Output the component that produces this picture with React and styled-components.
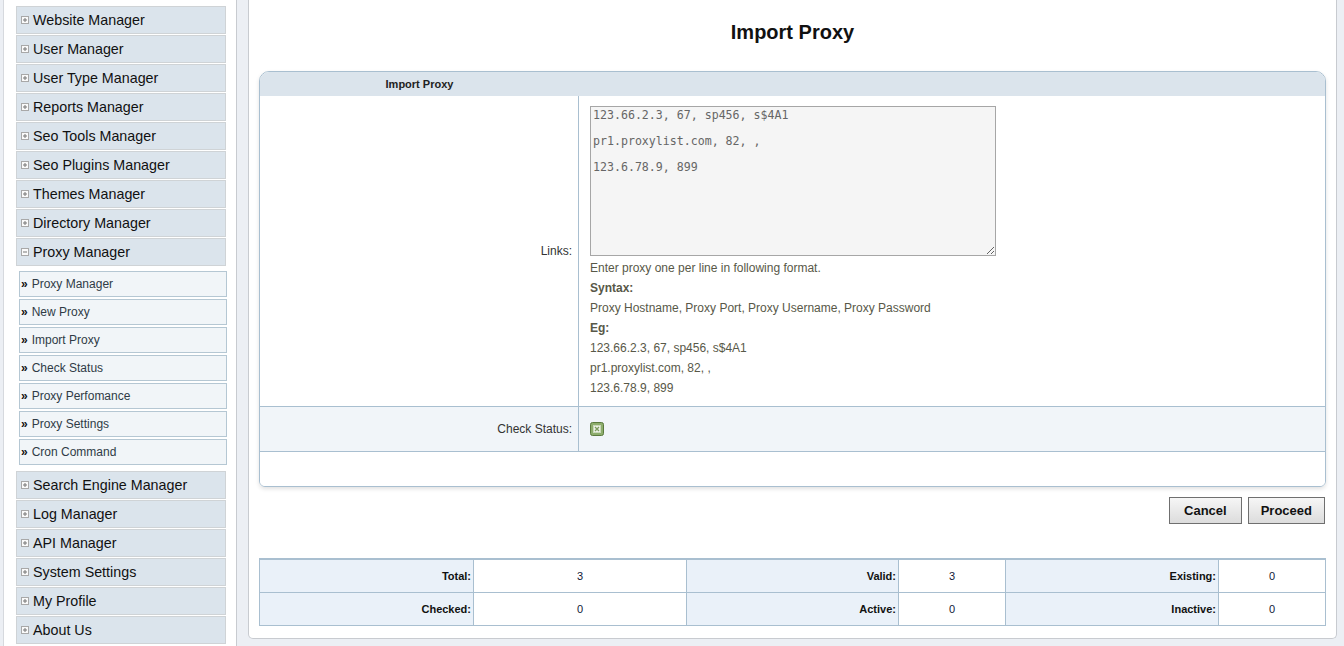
import React from 'react';
import styled, { createGlobalStyle } from 'styled-components';

const GlobalStyle = createGlobalStyle`
  html, body {
    margin: 0;
    padding: 0;
    background: #eceff4;
    font-family: "Liberation Sans", Arial, sans-serif;
    color: #333;
  }
`;

const Page = styled.div`
  display: flex;
  align-items: flex-start;
  height: 646px;
  overflow: hidden;
`;

const Sidebar = styled.div`
  box-sizing: border-box;
  display: flex;
  flex-direction: column;
  width: 234px;
  height: 660px;
  margin-left: 3px;
  padding: 6px 0 0 12px;
  background: #fff;
  border-left: 1px solid #d6d9de;
  border-right: 1px solid #c8cbd0;
`;

const MenuItem = styled.div`
  box-sizing: border-box;
  display: flex;
  align-items: center;
  flex-shrink: 0;
  gap: 4px;
  width: 210px;
  height: 28px;
  margin-bottom: 1px;
  padding-left: 4px;
  background: #dbe4ec;
  border: 1px solid #cfd3d6;
  font-size: 14.3px;
  color: #111;
`;

const SubList = styled.div`
  margin: 4px 0 4px 3px;
`;

const SubItem = styled.div`
  box-sizing: border-box;
  display: flex;
  align-items: center;
  width: 208px;
  height: 26px;
  margin-bottom: 2px;
  padding-left: 1px;
  background: #f1f5f8;
  border: 1px solid #b5c7d3;
  font-size: 12px;
  color: #2f3b46;
`;

const Arrows = styled.span`
  font-size: 12px;
  font-weight: bold;
  color: #111;
  margin-right: 4px;
`;

const Main = styled.div`
  box-sizing: border-box;
  width: 1089px;
  height: 639px;
  margin-left: 11px;
  padding: 20px 10px 0;
  background: #fff;
  border: 1px solid #c8cbd0;
  border-top: none;
  border-radius: 0 0 5px 5px;
`;

const Title = styled.h1`
  margin: 0 0 27px;
  font-size: 20px;
  line-height: 24px;
  font-weight: bold;
  text-align: center;
  color: #111;
`;

const Card = styled.div`
  border: 1px solid #a9bfd0;
  border-radius: 10px 10px 6px 6px;
  box-shadow: 0 2px 4px rgba(0, 0, 0, 0.12);
  overflow: hidden;
`;

const Row = styled.div`
  display: grid;
  grid-template-columns: 319px 1fr;
  background: ${p => p.$bg || '#fff'};
  border-bottom: ${p => (p.$last ? 'none' : '1px solid #a9bfd0')};
  min-height: ${p => p.$h || 0}px;
`;

const HeadRow = styled.div`
  display: grid;
  grid-template-columns: 319px 1fr;
  height: 24px;
  background: #dbe4ec;
`;

const HeadCell = styled.div`
  display: flex;
  align-items: center;
  justify-content: center;
  font-size: 11px;
  font-weight: bold;
  color: #222;
`;

const Label = styled.div`
  display: flex;
  align-items: center;
  justify-content: flex-end;
  padding-right: 6px;
  border-right: 1px solid #a9bfd0;
  font-size: 12px;
  color: #333;
`;

const Field = styled.div`
  display: flex;
  flex-direction: column;
  align-items: flex-start;
  justify-content: ${p => (p.$center ? 'center' : 'flex-start')};
  padding: ${p => (p.$center ? '0 11px' : '10px 11px 8px')};
`;

const Textarea = styled.textarea`
  box-sizing: border-box;
  width: 406px;
  height: 150px;
  margin: 0;
  padding: 2px 2px 1px;
  background: #f5f5f5;
  border: 1px solid #a6a6a6;
  font-family: "DejaVu Sans Mono", monospace;
  font-size: 11.6px;
  line-height: 13px;
  color: #666;
  outline: none;
`;

const Hint = styled.div`
  margin-top: 2px;
  font-size: 12px;
  line-height: 20px;
  color: #585848;
`;

const HintLine = styled.div`
  font-weight: ${p => (p.$bold ? 'bold' : 'normal')};
`;

const Buttons = styled.div`
  display: flex;
  justify-content: flex-end;
  gap: 6px;
  margin-top: 10px;
  padding-right: 1px;
`;

const Button = styled.button`
  box-sizing: border-box;
  height: 27px;
  padding: 0 ${p => p.$pad}px;
  background: linear-gradient(#f6f6f6, #dcdcdc);
  border: 1px solid #6f6f6f;
  font-family: "Liberation Sans", Arial, sans-serif;
  font-size: 13px;
  font-weight: bold;
  color: #111;
`;

const Stats = styled.div`
  display: grid;
  grid-template-columns: 213px 212px 211px 106px 212px 1fr;
  grid-auto-rows: 32px;
  gap: 1px;
  margin-top: 34px;
  background: #a9bfd0;
  border: 1px solid #a9bfd0;
  border-top-width: 2px;
`;

const StatLabel = styled.div`
  display: flex;
  align-items: center;
  justify-content: flex-end;
  padding-right: 2px;
  background: #eaf1f9;
  font-size: 11px;
  font-weight: bold;
  color: #111;
`;

const StatValue = styled.div`
  display: flex;
  align-items: center;
  justify-content: center;
  background: #fff;
  font-size: 11px;
  color: #101838;
`;

const Toggle = ({ open }) => (
  <svg width="8" height="8" viewBox="0 0 8 8">
    <rect x="0.5" y="0.5" width="7" height="7" fill="#fafafa" stroke="#a8a8a8" />
    <path d="M2 4h4" stroke="#777" />
    {!open && <path d="M4 2v4" stroke="#777" />}
  </svg>
);

const CheckIcon = () => (
  <svg width="14" height="14" viewBox="0 0 14 14">
    <rect x="0.5" y="0.5" width="13" height="13" rx="2" fill="#8dad6c" stroke="#5b7a3e" />
    <rect x="3.5" y="3.5" width="7" height="7" fill="#eef3e8" stroke="#c9d8b9" />
    <path d="M5 5l4 4M9 5l-4 4" stroke="#7c9a5e" strokeWidth="1.3" />
  </svg>
);

const topMenus = [
  'Website Manager', 'User Manager', 'User Type Manager', 'Reports Manager',
  'Seo Tools Manager', 'Seo Plugins Manager', 'Themes Manager', 'Directory Manager',
];
const subMenus = [
  'Proxy Manager', 'New Proxy', 'Import Proxy', 'Check Status',
  'Proxy Perfomance', 'Proxy Settings', 'Cron Command',
];
const bottomMenus = [
  'Search Engine Manager', 'Log Manager', 'API Manager',
  'System Settings', 'My Profile', 'About Us',
];

const sample = '123.66.2.3, 67, sp456, s$4A1\n\npr1.proxylist.com, 82, ,\n\n123.6.78.9, 899';

const stats = [
  ['Total:', 3], ['Valid:', 3], ['Existing:', 0],
  ['Checked:', 0], ['Active:', 0], ['Inactive:', 0],
];

export default function App() {
  return (
    <Page>
      <GlobalStyle />
      <Sidebar>
        {topMenus.map(m => (
          <MenuItem key={m}><Toggle />{m}</MenuItem>
        ))}
        <MenuItem><Toggle open />Proxy Manager</MenuItem>
        <SubList>
          {subMenus.map(s => (
            <SubItem key={s}><Arrows>»</Arrows>{s}</SubItem>
          ))}
        </SubList>
        {bottomMenus.map(m => (
          <MenuItem key={m}><Toggle />{m}</MenuItem>
        ))}
      </Sidebar>

      <Main>
        <Title>Import Proxy</Title>
        <Card>
          <HeadRow>
            <HeadCell>Import Proxy</HeadCell>
            <div />
          </HeadRow>
          <Row>
            <Label>Links:</Label>
            <Field>
              <Textarea defaultValue={sample} spellCheck={false} />
              <Hint>
                <HintLine>Enter proxy one per line in following format.</HintLine>
                <HintLine $bold>Syntax:</HintLine>
                <HintLine>Proxy Hostname, Proxy Port, Proxy Username, Proxy Password</HintLine>
                <HintLine $bold>Eg:</HintLine>
                <HintLine>123.66.2.3, 67, sp456, s$4A1</HintLine>
                <HintLine>pr1.proxylist.com, 82, ,</HintLine>
                <HintLine>123.6.78.9, 899</HintLine>
              </Hint>
            </Field>
          </Row>
          <Row $bg="#f1f5f9" $h={44}>
            <Label>Check Status:</Label>
            <Field $center><CheckIcon /></Field>
          </Row>
          <Row $last $h={34} />
        </Card>

        <Buttons>
          <Button $pad={14}>Cancel</Button>
          <Button $pad={12}>Proceed</Button>
        </Buttons>

        <Stats>
          {stats.map(([label, value]) => (
            <React.Fragment key={label}>
              <StatLabel>{label}</StatLabel>
              <StatValue>{value}</StatValue>
            </React.Fragment>
          ))}
        </Stats>
      </Main>
    </Page>
  );
}
